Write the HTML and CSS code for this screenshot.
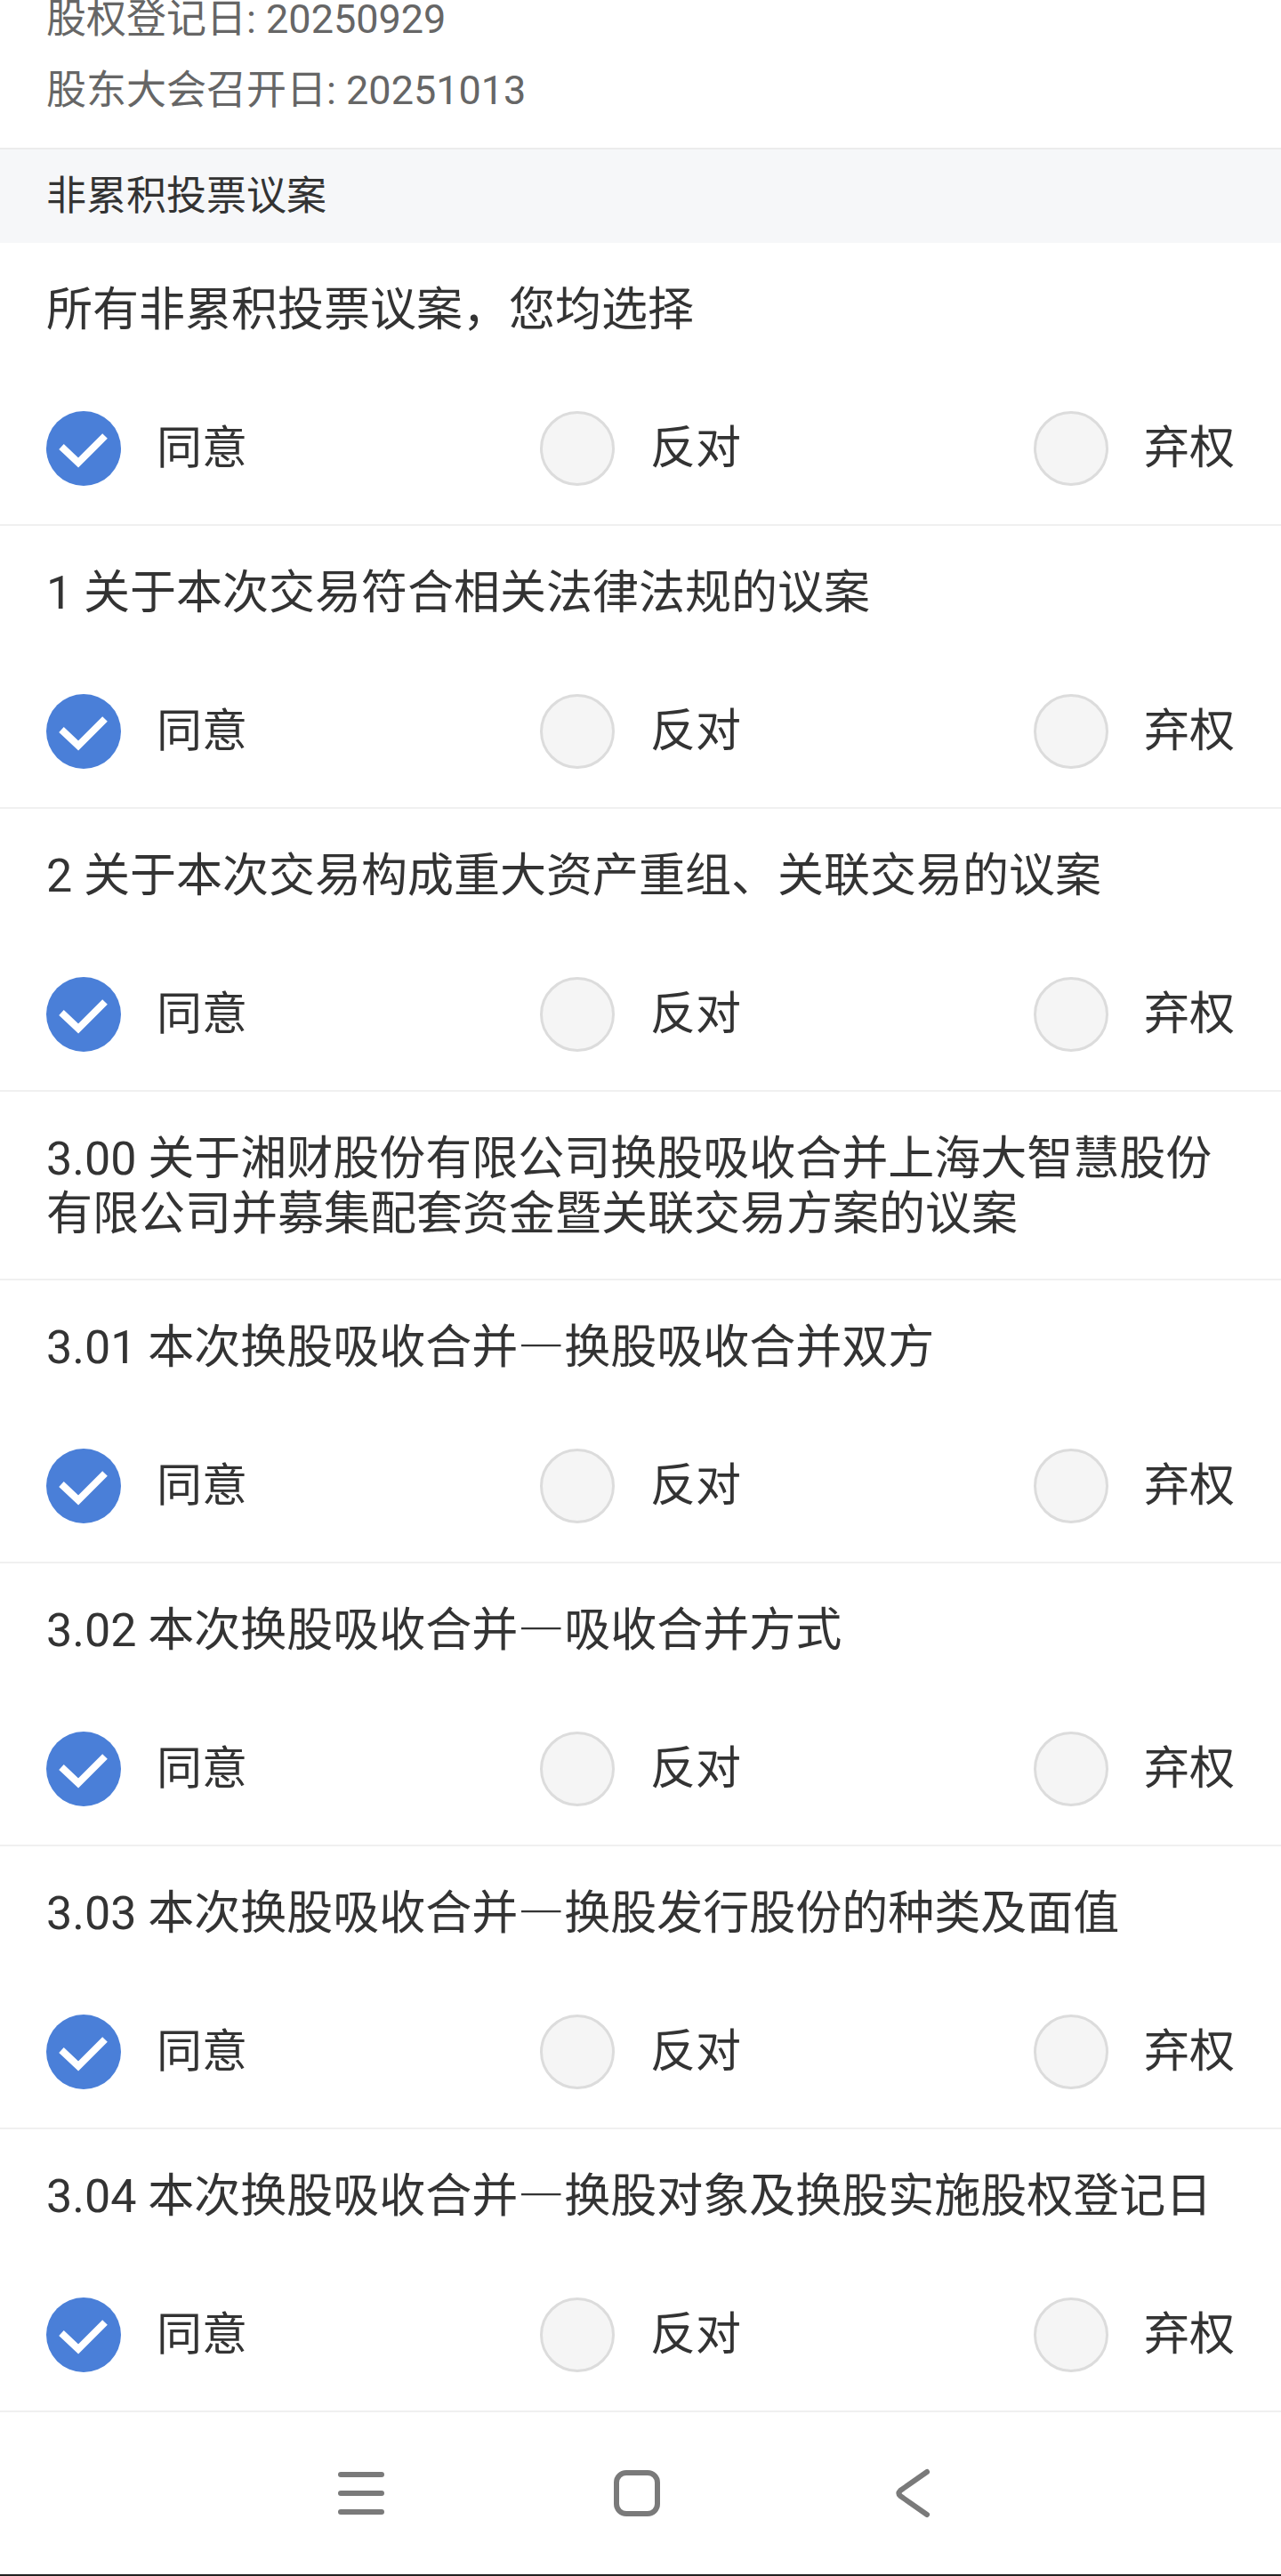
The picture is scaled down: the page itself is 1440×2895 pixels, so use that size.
FILE: index.html
```html
<!DOCTYPE html>
<html lang="zh-CN">
<head>
<meta charset="utf-8">
<title>投票</title>
<link rel="stylesheet" href="styles.css">
</head>
<body>
<div class="page">
  <main class="content">
    <div class="meta">
      <div class="meta-line">股权登记日: 20250929</div>
      <div class="meta-line">股东大会召开日: 20251013</div>
    </div>
    <div class="section-head">非累积投票议案</div>

    <div class="row">
      <div class="title">所有非累积投票议案，您均选择</div>
      <div class="options">
        <div class="opt"><span class="radio on"><svg viewBox="0 0 84 84"><path d="M17 40 L36 58 L66 28"/></svg></span><span class="label">同意</span></div>
        <div class="opt"><span class="radio"></span><span class="label">反对</span></div>
        <div class="opt"><span class="radio"></span><span class="label">弃权</span></div>
      </div>
    </div>

    <div class="row">
      <div class="title">1 关于本次交易符合相关法律法规的议案</div>
      <div class="options">
        <div class="opt"><span class="radio on"><svg viewBox="0 0 84 84"><path d="M17 40 L36 58 L66 28"/></svg></span><span class="label">同意</span></div>
        <div class="opt"><span class="radio"></span><span class="label">反对</span></div>
        <div class="opt"><span class="radio"></span><span class="label">弃权</span></div>
      </div>
    </div>

    <div class="row">
      <div class="title">2 关于本次交易构成重大资产重组、关联交易的议案</div>
      <div class="options">
        <div class="opt"><span class="radio on"><svg viewBox="0 0 84 84"><path d="M17 40 L36 58 L66 28"/></svg></span><span class="label">同意</span></div>
        <div class="opt"><span class="radio"></span><span class="label">反对</span></div>
        <div class="opt"><span class="radio"></span><span class="label">弃权</span></div>
      </div>
    </div>

    <div class="row">
      <div class="title">3.00 关于湘财股份有限公司换股吸收合并上海大智慧股份有限公司并募集配套资金暨关联交易方案的议案</div>
    </div>

    <div class="row">
      <div class="title">3.01 本次换股吸收合并<span class="dash">—</span>换股吸收合并双方</div>
      <div class="options">
        <div class="opt"><span class="radio on"><svg viewBox="0 0 84 84"><path d="M17 40 L36 58 L66 28"/></svg></span><span class="label">同意</span></div>
        <div class="opt"><span class="radio"></span><span class="label">反对</span></div>
        <div class="opt"><span class="radio"></span><span class="label">弃权</span></div>
      </div>
    </div>

    <div class="row">
      <div class="title">3.02 本次换股吸收合并<span class="dash">—</span>吸收合并方式</div>
      <div class="options">
        <div class="opt"><span class="radio on"><svg viewBox="0 0 84 84"><path d="M17 40 L36 58 L66 28"/></svg></span><span class="label">同意</span></div>
        <div class="opt"><span class="radio"></span><span class="label">反对</span></div>
        <div class="opt"><span class="radio"></span><span class="label">弃权</span></div>
      </div>
    </div>

    <div class="row">
      <div class="title">3.03 本次换股吸收合并<span class="dash">—</span>换股发行股份的种类及面值</div>
      <div class="options">
        <div class="opt"><span class="radio on"><svg viewBox="0 0 84 84"><path d="M17 40 L36 58 L66 28"/></svg></span><span class="label">同意</span></div>
        <div class="opt"><span class="radio"></span><span class="label">反对</span></div>
        <div class="opt"><span class="radio"></span><span class="label">弃权</span></div>
      </div>
    </div>

    <div class="row">
      <div class="title">3.04 本次换股吸收合并<span class="dash">—</span>换股对象及换股实施股权登记日</div>
      <div class="options">
        <div class="opt"><span class="radio on"><svg viewBox="0 0 84 84"><path d="M17 40 L36 58 L66 28"/></svg></span><span class="label">同意</span></div>
        <div class="opt"><span class="radio"></span><span class="label">反对</span></div>
        <div class="opt"><span class="radio"></span><span class="label">弃权</span></div>
      </div>
    </div>
  </main>

  <nav class="navbar">
    <span class="nav-btn">
      <svg viewBox="0 0 60 60" class="nav-ico"><path d="M7 9 H53 M7 30 H53 M7 51 H53"/></svg>
    </span>
    <span class="nav-btn">
      <svg viewBox="0 0 60 60" class="nav-ico"><rect x="7" y="7" width="46" height="46" rx="11"/></svg>
    </span>
    <span class="nav-btn">
      <svg viewBox="0 0 60 60" class="nav-ico"><path d="M46 6 L16 27 Q13 30 16 33 L46 54"/></svg>
    </span>
  </nav>
</div>
</body>
</html>
```

FILE: styles.css
```css
html, body {
  margin: 0;
  padding: 0;
  background: #ffffff;
}

body {
  font-family: Roboto, "Noto Sans CJK SC", sans-serif;
  color: #333333;
}

.page {
  width: 1440px;
  height: 2895px;
  display: flex;
  flex-direction: column;
  overflow: hidden;
}

.content {
  flex: 0 0 auto;
}

.meta {
  display: flex;
  flex-direction: column;
  gap: 36px;
  padding: 0 52px 42px;
}

.meta-line {
  font-size: 45px;
  line-height: 44px;
  color: #666666;
}

.section-head {
  height: 105px;
  line-height: 105px;
  border-top: 2px solid #ececec;
  background: #f6f7f9;
  padding: 0 52px;
  font-size: 45px;
  color: #333333;
}

.row {
  border-bottom: 2px solid #f0f0f0;
}

.title {
  padding: 45px 52px 41px;
  font-size: 52px;
  line-height: 62px;
  color: #333333;
}

.dash {
  font-family: "Noto Sans CJK SC", sans-serif;
  line-height: 0;
}

.options {
  display: flex;
  justify-content: space-between;
  align-items: center;
  padding: 41px 52px 43px;
}

.opt {
  display: flex;
  align-items: center;
  gap: 40px;
}

.radio {
  width: 84px;
  height: 84px;
  box-sizing: border-box;
  border-radius: 50%;
  border: 3px solid #dcdcdc;
  background: #f5f5f5;
  display: flex;
  align-items: center;
  justify-content: center;
}

.radio.on {
  border: none;
  background: #4a7fd8;
}

.radio svg {
  width: 84px;
  height: 84px;
  display: block;
}

.radio svg path {
  fill: none;
  stroke: #ffffff;
  stroke-width: 8;
  stroke-linejoin: miter;
  stroke-linecap: butt;
}

.label {
  font-size: 51px;
  line-height: 62px;
  color: #333333;
}

.navbar {
  flex: 1 1 auto;
  display: flex;
  justify-content: center;
  align-items: center;
  gap: 250px;
  padding-right: 8px;
  border-bottom: 2px solid #222222;
  box-sizing: border-box;
}

.nav-btn {
  width: 60px;
  height: 60px;
  display: block;
}

.nav-ico {
  width: 60px;
  height: 60px;
  display: block;
}

.nav-ico path,
.nav-ico rect {
  fill: none;
  stroke: #7a7a7a;
  stroke-width: 6;
  stroke-linecap: round;
  stroke-linejoin: round;
}
```
